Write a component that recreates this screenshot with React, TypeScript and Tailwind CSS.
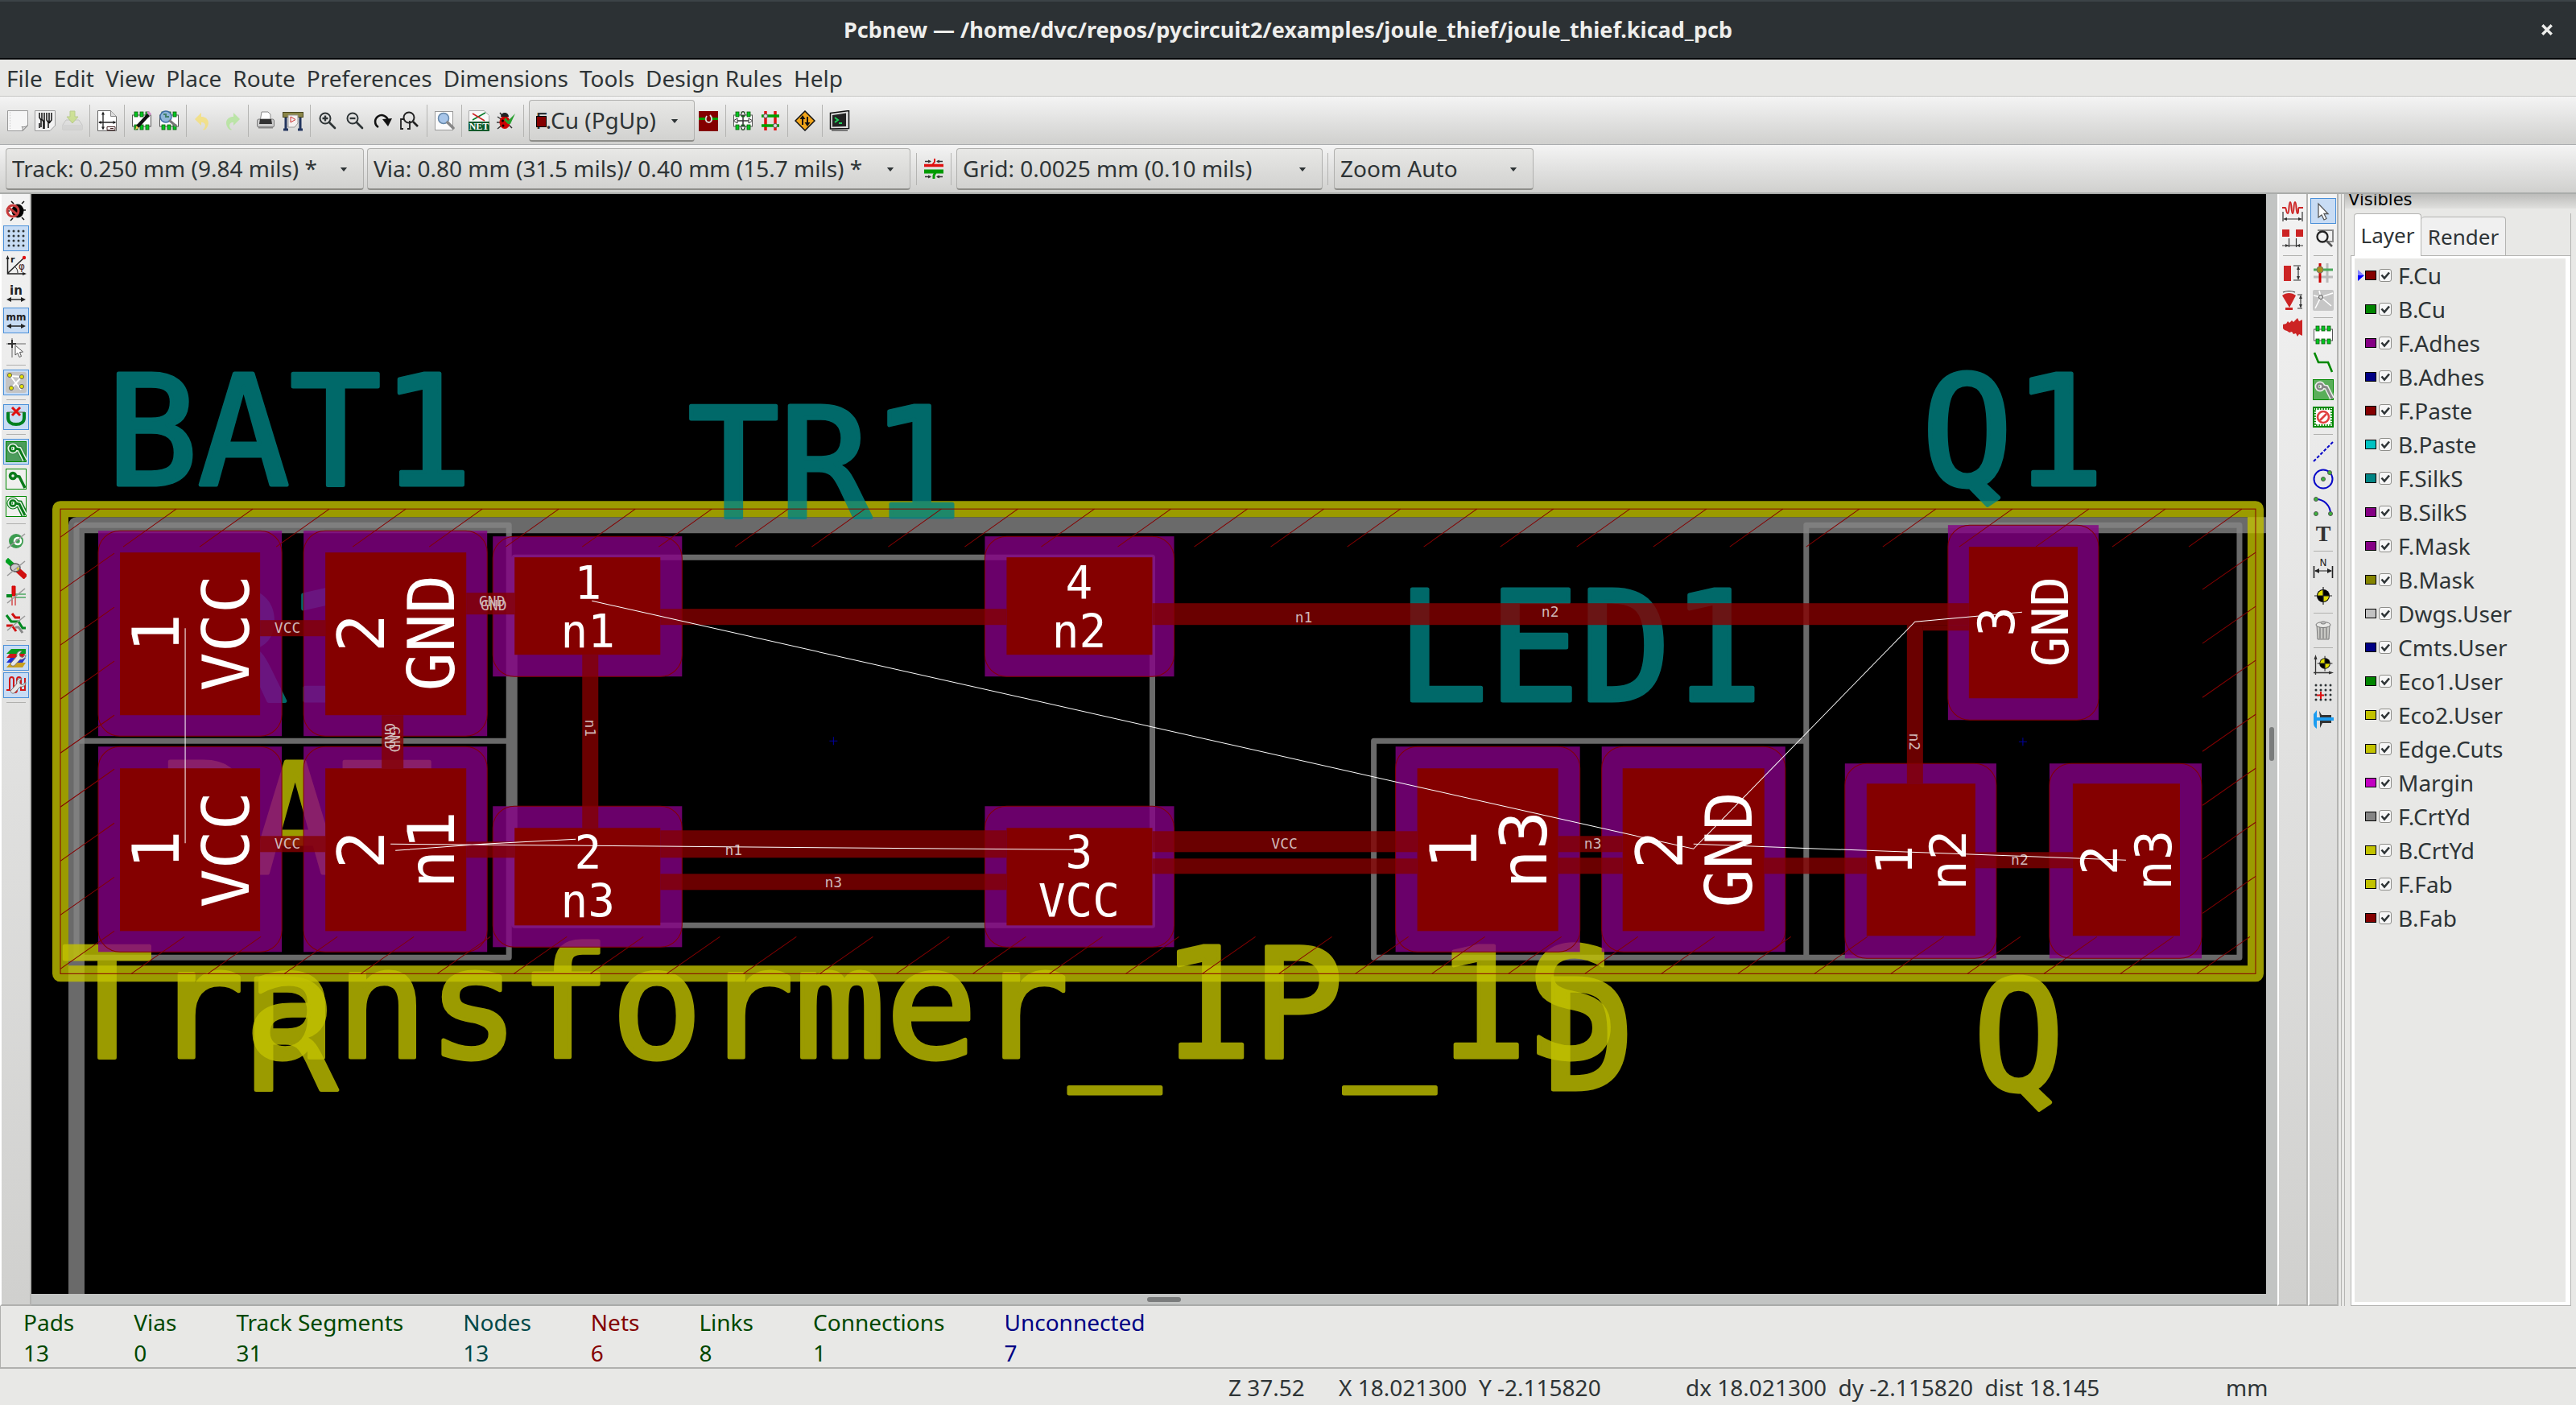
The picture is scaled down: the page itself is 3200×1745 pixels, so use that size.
import React, {useState} from "react";

const DARK = "#2e3436";
const GREEN = "#008800";
const CU = "#840000";

/* ---------- icons, all on a 26x26 grid ---------- */

const chip = (
    <g>
        <rect x="1.5" y="6" width="23" height="14" fill="#fff" stroke="#555"/>
        {[4, 11, 18].map((x) => (
            <g key={x} fill="#00c820" stroke="#0a5a0a" strokeWidth=".8">
                <rect x={x} y="2" width="4" height="6"/>
                <rect x={x} y="18" width="4" height="6"/>
            </g>
        ))}
    </g>
);

const lens = (
    <g fill="none" stroke={DARK}>
        <circle cx="10" cy="10" r="6.5" strokeWidth="2"/>
        <path d="M15 15l7 7" strokeWidth="2.6" strokeLinecap="round"/>
    </g>
);

const slash = <path d="M2 22L24 4" stroke="#999" strokeWidth="1.5"/>;

const target = (
    <g>
        <circle cx="13" cy="13" r="8" fill="#000"/>
        <path d="M13 13V6a7 7 0 0 0-7 7zM13 13v7a7 7 0 0 0 7-7z" fill="#e0dc00"/>
        <path d="M13 2v22M2 13h22" stroke="#222" strokeWidth="1.2"/>
    </g>
);

const trackPad = (bg: string, ring: string, core: string, halo: string) => (
    <g>
        <rect x=".5" y=".5" width="25" height="25" fill={bg} stroke={GREEN}/>
        <g fill="none" strokeLinecap="butt">
            <path d="M9 9l8 1 7 14" stroke={ring} strokeWidth="9"/>
            <circle cx="9" cy="9" r="4" stroke={ring} strokeWidth="7"/>
            <path d="M9 9l8 1 7 14" stroke={halo} strokeWidth="6"/>
            <circle cx="9" cy="9" r="4" stroke={halo} strokeWidth="5"/>
            <path d="M12 9l5 1 7 14" stroke={core} strokeWidth="3"/>
            <circle cx="9" cy="9" r="3.5" stroke={core} strokeWidth="2.6"/>
        </g>
    </g>
);

const wrench = (
    <path
        d="M25 9.5l-4 3-3-1-1-3 3-4c-4-.5-7 2.500-6 6.500L7 19c-2 2 1 5.500 4 3.500l7-7.500c4 .5 7-2 7-5.500z"
        fill="#e6e6e6" stroke="#777" strokeWidth="1"
    />
);

const icons: Record<string, React.ReactNode> = {
    newBoard: (
        <g>
            <path d="M.5.5h25v18.500l-6.500 6.500H.5z" fill="#f6f6f6" stroke="#999"/>
            <path d="M19 25.500c.5-2 0-4-1-5 3 .5 5.500 0 7.500-2z" fill="#ddd" stroke="#888"/>
            <path d="M3.500 2v22" stroke="#ccc" strokeDasharray="1 1"/>
        </g>
    ),
    openBoard: (
        <g>
            <path d="M.5.5h25v18.500l-6.500 6.500H.5z" fill="#f2f2f2" stroke="#999"/>
            <path d="M6 3v6l2 3v9M9 3v8l2 3v9M12 3v20M15 3v9l2 3v7M18 3v12M21 3v9l-3 4M6 16v6" fill="none" stroke="#111" strokeWidth="1.500"/>
        </g>
    ),
    save: (
        <g opacity=".5">
            <path d="M5 12h16l4 6v6H1v-6z" fill="#ddd" stroke="#aaa"/>
            <path d="M1 18h24v6H1z" fill="#ccc"/>
            <path d="M10 1h6v7h4l-7 8-7-8h4z" fill="#b5dc4a" stroke="#8fb43a"/>
        </g>
    ),
    page: (
        <g>
            <path d="M1.500.5h16l7 7v18h-23z" fill="#fff" stroke="#666"/>
            <path d="M17.500.5v7h7" fill="#ddd" stroke="#888"/>
            <path d="M8 3v20M3 15h20" stroke="#222" strokeWidth="1.300"/>
            <path d="M8 1.500l-2 4h4zM8 24.500l-2-4h4zM2 15l4-2v4zM24.500 15l-4-2v4z" fill="#222"/>
            <path d="M13 20.500h10v4H13zM17 22.500h4" fill="#fff" stroke="#422"/>
        </g>
    ),
    moduleEditor: (
        <g>
            {chip}
            <path d="M6 19L20 4l3 3L9 22l-4 2z" fill="#111"/>
            <path d="M19 3l2-2 4 3-2 3z" fill="#d58ac8"/>
            <path d="M5 24l1.500-5 3 3z" fill="#f3d14e"/>
        </g>
    ),
    moduleViewer: (
        <g>
            {chip}
            <circle cx="9" cy="8" r="7" fill="#8fb6d8" stroke="#3d6ea5" strokeWidth="1.500"/>
            <path d="M6 5h3v3h4" fill="none" stroke="#40806a" strokeWidth="2"/>
            <path d="M14 13l7 6" stroke="#777" strokeWidth="3" strokeLinecap="round"/>
        </g>
    ),
    undo: <path d="M10 3v5c8 0 12 7 6 15-1 1-3 2-4 1 5-4 3-10-2-9v4L2 11z" fill="#f3df7c" opacity=".85"/>,
    redo: <path d="M16 3v5C8 8 4 15 10 23c1 1 3 2 4 1-5-4-3-10 2-9v4l8-8z" fill="#b4e49c" opacity=".85"/>,
    print: (
        <g>
            <path d="M8 2h8l3 3v9H6z" fill="#fff" stroke="#888"/>
            <rect x="2.500" y="11" width="21" height="10" rx="2" fill="#ccc" stroke="#777"/>
            <path d="M6 11h14l1 6H5z" fill="#333"/>
            <rect x="4" y="20" width="18" height="2.500" fill="#888"/>
        </g>
    ),
    plot: (
        <g>
            <rect x=".5" y="2.500" width="25" height="6" fill="#8a8548" stroke="#4a4820"/>
            <path d="M4 9v14M22 9v14M1 24h6M19 24h6" stroke="#22355e" strokeWidth="3"/>
            <path d="M7 6h12v10l-4 5H7z" fill="#f4f0f0" stroke="#999"/>
            <path d="M10 8v7l6-3.500z" fill="none" stroke="#c33"/>
        </g>
    ),
    zoomIn: <g>{lens}<path d="M10 6.500v7M6.500 10h7" stroke={DARK} strokeWidth="2.400"/></g>,
    zoomOut: <g>{lens}<path d="M6.500 10h7" stroke={DARK} strokeWidth="2.400"/></g>,
    redraw: (
        <g>
            <path d="M8 21a8 8 0 1 1 12-8" fill="none" stroke="#111" strokeWidth="2.600"/>
            <path d="M13 11l12-1-5 10z" fill="#111"/>
        </g>
    ),
    zoomFit: (
        <g fill="none" stroke="#222">
            <path d="M5 11H2v12h3M10 23h3V13" strokeWidth="1.800"/>
            <circle cx="12" cy="9" r="6.500" strokeWidth="2"/>
            <path d="M17 14l6 6" strokeWidth="2.600"/>
        </g>
    ),
    find: (
        <g>
            <rect x="1.500" y="1.500" width="22" height="23" fill="#fbfbfb" stroke="#999"/>
            <circle cx="12" cy="10" r="6.500" fill="#a8c6ea" stroke="#6688aa" strokeWidth="1.500"/>
            <path d="M17 15l7 7" stroke="#888" strokeWidth="3.500" strokeLinecap="round"/>
        </g>
    ),
    netlist: (
        <g>
            <path d="M.5.5h19l6 6v19H.5z" fill="#f8f8f8" stroke="#aaa"/>
            <path d="M5 12L21 3" stroke="#0a7a2a" strokeWidth="1.500"/>
            <path d="M5 4l15 9" stroke="#c22" strokeWidth="1.500"/>
            <rect y="14" width="26" height="12" fill="#0b5a2b"/>
            <text x="13" y="24" fontFamily="Liberation Serif, serif" fontSize="12" fontWeight="700" fill="#fff" textAnchor="middle">NET</text>
        </g>
    ),
    drc: (
        <g>
            <path d="M2 8l6 4M1 15h6M2 23l6-5M20 22l-4-4M5 3l4 5" stroke="#333" strokeWidth="1.500"/>
            <ellipse cx="11" cy="15" rx="6.500" ry="8" fill="#c00"/>
            <path d="M6 8a5 5 0 0 1 10 0z" fill="#222"/>
            <circle cx="8.500" cy="13" r="1.500"/>
            <circle cx="9" cy="19" r="1.500"/>
            <path d="M12 9l3 4 9-9-6 13h-3l-5-5z" fill="#2aa030"/>
        </g>
    ),
    layerPair: (
        <g>
            <rect x="1" y="1" width="24" height="25" fill="#840000"/>
            <path d="M1 10.500h8M17 10.500h8" stroke="#00a000" strokeWidth="3"/>
            <path d="M11 7c-2 3-2 8 3 8 4-1 4-6 1-9" fill="none" stroke="#ddd" strokeWidth="1.800"/>
        </g>
    ),
    modeFootprint: (
        <g>
            {chip}
            <path d="M13 3v20M3 13h20" stroke="#333" strokeWidth="1.500"/>
            <path d="M13 1l-3 5h6zM13 25l-3-5h6zM1 13l5-3v6zM25 13l-5-3v6z" fill="#fff" stroke="#333"/>
        </g>
    ),
    modeTrack: (
        <g>
            <path d="M7 1v24M19 1v24" stroke="#e01010" strokeWidth="3.500"/>
            <path d="M2 7h22M2 19h22" stroke="#00a000" strokeWidth="3.500"/>
            <circle cx="7" cy="7" r="2.500" fill="#ddd" stroke="#555"/>
            <circle cx="19" cy="19" r="2.500" fill="#ddd" stroke="#555"/>
        </g>
    ),
    autoroute: (
        <g>
            <path d="M13 1l12 12-12 12L1 13z" fill="#f2a51a" stroke="#111" strokeWidth="1.500"/>
            <path d="M10 18V10M16 8v8" stroke="#111" strokeWidth="2"/>
            <path d="M10 6l-3.500 5h7zM16 20l-3.500-5h7z" fill="#111"/>
        </g>
    ),
    console: (
        <g>
            <path d="M1.500 3.500L24.500.5v22l-23 .5z" fill="#ddd" stroke="#111" strokeWidth="1.500"/>
            <path d="M4 6l17-2.500V20L4 20.500z" fill="#222"/>
            <path d="M7 9l4 3-4 3M12 16h4" fill="none" stroke="#1fd35a" strokeWidth="2"/>
            <path d="M3 25h20" stroke="#777" strokeWidth="2"/>
        </g>
    ),
    autoWidth: (
        <g>
            <path d="M1 8.500h24" stroke="#e01010" strokeWidth="3.500"/>
            <path d="M1 16h24" stroke="#009a00" strokeWidth="5"/>
            <path d="M14 0v4l-3 4" fill="none" stroke="#e01010" strokeWidth="2"/>
            <path d="M15 17l-2 4v4" fill="none" stroke="#009a00" strokeWidth="3"/>
            <path d="M2 3.500h7M17 3.500h7M2 22.500h7M17 22.500h7" stroke="#333" strokeWidth="1.300"/>
            <path d="M10 3.500l-4-2v4zM16 3.500l4-2v4zM10 22.500l-4-2v4zM16 22.500l4-2v4z" fill="#333"/>
        </g>
    ),
    drcOff: (
        <g>
            <path d="M10 4l-3-3M20 4l3-3M5 13H1M25 12h-4M9 22l-3 3M20 21l3 3" stroke="#111" strokeWidth="1.500"/>
            <ellipse cx="15" cy="13" rx="7.500" ry="8.500"/>
            <circle cx="9" cy="13" r="7" fill="none" stroke="#c83c3c" strokeWidth="3"/>
            <path d="M4 9l10 8" stroke="#c83c3c" strokeWidth="3"/>
        </g>
    ),
    grid: (
        <g fill={DARK}>
            {[4, 10, 16, 22].map((y) => [4, 10, 16, 22].map((x) => <circle key={x + "-" + y} cx={x} cy={y} r="1.500"/>))}
        </g>
    ),
    polar: (
        <g fill="none" stroke="#222" strokeWidth="1.500">
            <path d="M2.500 3v20H24M3 22L22 4"/>
            <path d="M2.500 0L.5 5h4zM26 23l-5-2v4z" fill="#222" stroke="none"/>
            <circle cx="23" cy="3" r="2.200" fill="#e01010" stroke="none"/>
            <path d="M11 14c3 2 4 5 4 8" strokeWidth="1"/>
            <text x="6" y="9" fontFamily="DejaVu Sans, sans-serif" fontSize="11" fontWeight="700" fill="#222" stroke="none">r</text>
            <text x="16" y="18" fontFamily="DejaVu Sans, sans-serif" fontSize="12" fill="#422" stroke="none">φ</text>
        </g>
    ),
    inch: (
        <g fill="#222">
            <text x="13" y="15" fontFamily="DejaVu Sans, sans-serif" fontSize="15" fontWeight="700" textAnchor="middle">in</text>
            <path d="M3 21h20" stroke="#222" strokeWidth="1.500"/>
            <path d="M1 21l6-3v6zM25 21l-6-3v6z"/>
        </g>
    ),
    mm: (
        <g fill="#222">
            <text x="13" y="13" fontFamily="DejaVu Sans, sans-serif" fontSize="12" fontWeight="700" textAnchor="middle">mm</text>
            <path d="M3 20h20" stroke="#222" strokeWidth="1.500"/>
            <path d="M1 20l6-3v6zM25 20l-6-3v6z"/>
        </g>
    ),
    cursor: (
        <g>
            <path d="M8 1v24M1 8h24" stroke="#aaa" strokeWidth="2"/>
            <path d="M8 3v10M3 8h10" stroke="#333" strokeWidth="2"/>
            <path d="M12 10v12l3-2.500 2 5 2.500-1-2-5 4-.5z" fill="#fff" stroke="#555"/>
        </g>
    ),
    ratsnest: (
        <g>
            <rect width="26" height="26" rx="3" fill="#c4c4c4"/>
            <path d="M6 5l13 17M20 6L7 20M6 5l14 1" stroke="#fff" strokeWidth="2"/>
            {[[5, 4], [20, 6], [7, 20], [20, 18]].map(([x, y]) => <circle key={x + "-" + y} cx={x} cy={y} r="2.600" fill="#e2e000" stroke="#666"/>)}
        </g>
    ),
    autoDelete: (
        <g>
            <path d="M2 7h22" stroke="#999" strokeWidth="2"/>
            <path d="M3 7v7c0 5 4 8 10 8s10-3 10-8V7" fill="none" stroke="#008020" strokeWidth="4"/>
            <path d="M8 1l10 10M18 1L8 11" stroke="#e01010" strokeWidth="3"/>
        </g>
    ),
    zoneFill: trackPad("#4c9c5c", "#3e8e4e", "#0a7a1a", "#e8f4e8"),
    zoneOff: (
        <g>
            <rect x=".5" y=".5" width="25" height="25" fill="#f0f0ee" stroke={GREEN}/>
            <circle cx="9" cy="9" r="3.500" fill="none" stroke="#0a7a1a" strokeWidth="3.500"/>
            <path d="M12 9l5 1 7 14" fill="none" stroke="#0a7a1a" strokeWidth="3.500"/>
        </g>
    ),
    zoneOutline: trackPad("#f0f0ee", "#0a7a1a", "#0a7a1a", "#e8f4e8"),
    viaSketch: (
        <g>
            <circle cx="13" cy="13" r="9" fill="#3c9c50"/>
            <circle cx="15" cy="13" r="4" fill="#3c9c50" stroke="#fff" strokeWidth="2.500"/>
            {slash}
        </g>
    ),
    padSketch: (
        <g>
            <path d="M1 2l10 9" stroke="#00a020" strokeWidth="6"/>
            <path d="M15 15l10 9" stroke="#d01010" strokeWidth="7"/>
            <ellipse cx="12" cy="12" rx="6" ry="5" fill="#ccc" stroke="#555" strokeWidth="1.500"/>
            <path d="M13 12h4l-2 4z" fill="#e0c020"/>
            {slash}
        </g>
    ),
    edgeSketch: (
        <g>
            <path d="M8 1h4v12H8z" fill="#e01010" stroke="#c00"/>
            <path d="M1 11h7v4H1z" fill="#008820"/>
            <path d="M12 11h13M12 15h13" stroke="#008820"/>
            <path d="M8 15v10M12 15v10" stroke="#c00"/>
            {slash}
        </g>
    ),
    trackSketch: (
        <g fill="none" strokeWidth="3">
            <path d="M8 1l4 5h6" stroke="#d01010"/>
            <path d="M1 3l6 8h9l5 8h4" stroke="#008820"/>
            <path d="M1 16h7l5 7" stroke="#d01010"/>
            <path d="M12 18h4l5 7" stroke="#888"/>
            {slash}
        </g>
    ),
    layersManager: (
        <g>
            <path d="M1 25h20l4-6H6z" fill="#c8a020"/>
            <path d="M1 19h20l4-6H6z" fill="#2030d0"/>
            <path d="M1 13h20l4-6H6z" fill="#d01818"/>
            <path d="M1 8l6-6h18v6z" fill="#0a9a20"/>
            {wrench}
        </g>
    ),
    microwave: (
        <g>
            <path d="M1 19h4V6c0-4 5-4 5 0v13c0 4 4 4 4 0V6c0-4 5-4 5 0v13h5V4" fill="none" stroke="#d01818" strokeWidth="2"/>
            {wrench}
        </g>
    ),
    muLine: (
        <g>
            <path d="M0 9h4c1 0 1 7 3 7s1-14 3-14 1 14 3 14 1-14 3-14 1 14 3 14 0-7 2-7h5" fill="none" stroke="#cc2424" strokeWidth="2"/>
            <path d="M1 14v12M25 14v12M3 23h20" stroke="#333" strokeWidth="1.200"/>
            <path d="M1 23l5-2v4zM25 23l-5-2v4z" fill="#333"/>
        </g>
    ),
    muGap: (
        <g>
            <path d="M0 2h9v9H0zM17 2h9v9h-9z" fill="#cc2424"/>
            <path d="M8.500 13v11M17.500 13v11M0 22h26" stroke="#333" strokeWidth="1.200"/>
            <path d="M8 22l-4-2v4zM18 22l4-2v4z" fill="#333"/>
        </g>
    ),
    muStub: (
        <g>
            <path d="M2 4h9v19H2z" fill="#cc2424"/>
            <path d="M14 4h9M14 22h9M20 6v14" stroke="#333" strokeWidth="1.200"/>
            <path d="M20 4l-2 5h4zM20 22l-2-5h4z" fill="#333"/>
        </g>
    ),
    muArc: (
        <g>
            <path d="M0 7c5-4 12-4 17 0l-8 15zM4 22h9v3H4z" fill="#cc2424"/>
            <path d="M1 3c4-2 11-2 15 0M19 6h6M19 23h6M23 8v13" fill="none" stroke="#333" strokeWidth="1.200"/>
            <path d="M23 6l-2 5h4zM23 23l-2-5h4z" fill="#333"/>
        </g>
    ),
    muShape: <path d="M1 9l4-1 2-3 2 2 3-3 2 2 3-3 2-2 2 4 4-2v20l-4-2-2 3-2-4-3 1-2-3-3 1-3-2-3-1-2-2z" fill="#cc2424"/>,
    arrow: <path d="M7 4v17l4-3 3 6 3-1.500-3-6h5z" fill="#fff" stroke="#555" strokeWidth="1.300"/>,
    localView: (
        <g fill="none">
            <path d="M6 3h19v14h-7" stroke="#888" strokeWidth="2"/>
            <circle cx="12" cy="11" r="6.500" stroke="#222" strokeWidth="2.300"/>
            <path d="M17 16l7 7" stroke="#555" strokeWidth="2.600"/>
        </g>
    ),
    highlight: (
        <g>
            <path d="M18 1v24M1 18h24" stroke="#bbb" strokeWidth="3"/>
            <path d="M9 1v24" stroke="#c00" strokeWidth="3"/>
            <path d="M1 9h24" stroke="#4aa85a" strokeWidth="3"/>
            <circle cx="9" cy="9" r="4" fill="#a89020" stroke="#776"/>
        </g>
    ),
    localRats: (
        <g>
            <rect width="26" height="26" rx="2" fill="#c6c6c6"/>
            <path d="M1 7l9 2 15-5M10 9l13 11M10 9L3 23M10 9L8 1" fill="none" stroke="#fff" strokeWidth="1.600"/>
            <circle cx="10" cy="9" r="2.500" fill="#ddd" stroke="#555"/>
        </g>
    ),
    addModule: chip,
    addTrack: <path d="M2 1l5 12h12l5 12" fill="none" stroke={GREEN} strokeWidth="2.600"/>,
    addZone: trackPad("#5aae5a", "#5aae5a", "#888", "#eee"),
    keepout: (
        <g>
            <rect x="1" y="1" width="24" height="24" fill="#fff" stroke={GREEN} strokeWidth="2"/>
            <rect x="3" y="3" width="20" height="20" fill="none" stroke={GREEN} strokeWidth="2" strokeDasharray="1 1"/>
            <circle cx="13" cy="13" r="7" fill="none" stroke="#e04040" strokeWidth="2.600"/>
            <path d="M9 17l8-8" stroke="#e04040" strokeWidth="2.600"/>
        </g>
    ),
    addLine: <path d="M1 25L25 1" stroke="#0808c8" strokeWidth="2" strokeDasharray="4 2"/>,
    addCircle: (
        <g>
            <circle cx="13" cy="13" r="11.500" fill="none" stroke="#0808c8" strokeWidth="2"/>
            <circle cx="13" cy="13" r="2.500" fill="#3cb43c" stroke="#555"/>
            <circle cx="21" cy="5" r="2.500" fill="#3cb43c" stroke="#555"/>
        </g>
    ),
    addArc: (
        <g>
            <path d="M4 4c10 0 18 8 18 18" fill="none" stroke="#0808c8" strokeWidth="2"/>
            {[[4, 4], [4, 22], [22, 22]].map(([x, y]) => <circle key={x + "-" + y} cx={x} cy={y} r="2.500" fill="#3cb43c" stroke="#555"/>)}
        </g>
    ),
    addText: (
        <text x="13" y="22" fontFamily="Liberation Serif, serif" fontSize="28" fontWeight="700" fill="#333" textAnchor="middle">T</text>
    ),
    addDimension: (
        <g fill="#222">
            <text x="13" y="10" fontFamily="DejaVu Sans, sans-serif" fontSize="12" textAnchor="middle">N</text>
            <path d="M1.500 10v15M24.500 10v15" stroke="#222" strokeWidth="1.600"/>
            <path d="M3 16h20" stroke="#222"/>
            <path d="M2 16l6-3v6zM24 16l-6-3v6z"/>
        </g>
    ),
    addTarget: target,
    trash: (
        <g>
            <path d="M5 6h16l-1 18H6z" fill="#c8c8c4" stroke="#777"/>
            <path d="M9 9v14M13 9v14M17 9v14" stroke="#888" strokeWidth="1.500"/>
            <ellipse cx="13" cy="6" rx="9" ry="3.500" fill="#e8e8e6" stroke="#777"/>
            <ellipse cx="13" cy="3.500" rx="3" ry="1.500" fill="#ccc" stroke="#777"/>
        </g>
    ),
    origin: (
        <g>
            <path d="M3.500 3v22M1 22.500h22" stroke="#333" strokeWidth="1.300"/>
            <path d="M3.500 0l-2 6h4zM26 22.500l-6-2v4z" fill="#333"/>
            <g transform="translate(4 0) scale(.85)">{target}</g>
        </g>
    ),
    gridOrigin: (
        <g fill={DARK}>
            {[4, 10, 16, 22].map((y) => [4, 10, 16, 22].map((x) => <circle key={x + "-" + y} cx={x} cy={y} r="1.500"/>))}
            <path d="M10 12v9M5 16.500h9" stroke="#e01010" strokeWidth="2"/>
        </g>
    ),
    caliper: (
        <g>
            <path d="M8 2l3 5h12v3H9zM9 14h14v3H12l-3 6z" fill="#333"/>
            <path d="M1 6l4-5v9h21v4H5v10C2 22 1 20 1 17z" fill="#1c9cf0"/>
        </g>
    ),
};

const Icon = ({name}: { name: string }) => (
    <svg viewBox="0 0 26 26" className="size-[26px] shrink-0" aria-hidden="true">{icons[name]}</svg>
);

const ToolButton = ({name, active}: { name: string; active?: boolean }) => (
    <button
        type="button"
        aria-label={name}
        className={`flex shrink-0 items-center justify-center ${active ? "my-px size-8 border border-[#4a90d9] bg-[#c8dcf4]" : "h-[34px] w-[34px]"}`}
    >
        <Icon name={name}/>
    </button>
);

const VSep = () => (
    <div className="flex w-[9px] shrink-0 justify-center">
        <div className="h-10 w-px bg-[#b4b4b2]"/>
    </div>
);

// "|" is a separator, a leading "*" marks a pressed button
const ToolRow = ({items}: { items: string[] }) => (
    <>
        {items.map((item, i) => item === "|" ? <VSep key={i}/> : <ToolButton key={i} name={item}/>)}
    </>
);

const ToolColumn = ({items, className}: { items: string[]; className: string }) => (
    <div className={`flex shrink-0 flex-col items-center border-r-2 border-b-2 border-l-2 border-r-[#b4b4b2] border-b-[#b0b0ae] border-l-white bg-linear-to-b from-[#f2f2f2] to-[#d0d0ce] pt-1 ${className}`}>
        {items.map((item, i) => item === "|"
            ? <div key={i} className="flex h-[9px] items-center"><div className="h-px w-6 bg-[#b0b0ae]"/></div>
            : <ToolButton key={i} name={item.replace("*", "")} active={item.startsWith("*")}/>)}
    </div>
);

const Dropdown = ({label, value, className, children}: { label: string; value: string; className: string; children?: React.ReactNode }) => (
    <div className={`relative h-[52px] shrink-0 ${className}`}>
        <select
            aria-label={label}
            defaultValue={value}
            className="h-full w-full appearance-none rounded-[4px] border border-b-2 border-[#b0b0ae] border-b-[#8e8e8a] bg-linear-to-b from-[#e8e8e6] to-[#d2d2d0] pl-[7px] text-[28px]"
        >
            <option>{value}</option>
        </select>
        {children}
        <svg viewBox="0 0 10 6" className="pointer-events-none absolute top-6 right-5 h-[5px] w-[10px]" aria-hidden="true">
            <path d="M0 0h10L5 6z" fill={DARK}/>
        </svg>
    </div>
);

/* ---------- board drawing ---------- */

type Pad = {
    mask: number[];
    cu: number[];
    num: string;
    net: string;
    size: number;
    vertical?: boolean;
    at: number[]; // baseline of number, baseline of net, centre on the other axis
};

const pads: Pad[] = [
    {mask: [122, 659, 350, 914], cu: [149, 686, 323, 888], num: "1", net: "VCC", size: 80, vertical: true, at: [222, 309, 786]},
    {mask: [377, 659, 605, 914], cu: [404, 686, 579, 888], num: "2", net: "GND", size: 80, vertical: true, at: [477, 564, 786]},
    {mask: [122, 927, 350, 1182], cu: [149, 954, 323, 1156], num: "1", net: "VCC", size: 80, vertical: true, at: [222, 309, 1055]},
    {mask: [377, 927, 605, 1182], cu: [404, 954, 579, 1156], num: "2", net: "n1", size: 80, vertical: true, at: [477, 564, 1055]},
    {mask: [612, 666, 847, 840], cu: [639, 692, 820, 813], num: "1", net: "n1", size: 56, at: [744, 804, 730]},
    {mask: [612, 1001, 847, 1176], cu: [639, 1028, 820, 1149], num: "2", net: "n3", size: 56, at: [1079, 1139, 730]},
    {mask: [1223, 666, 1458, 840], cu: [1250, 692, 1431, 813], num: "4", net: "n2", size: 56, at: [744, 804, 1340]},
    {mask: [1223, 1001, 1458, 1176], cu: [1250, 1028, 1431, 1149], num: "3", net: "VCC", size: 56, at: [1079, 1139, 1340]},
    {mask: [1733, 927, 1962, 1182], cu: [1760, 954, 1935, 1156], num: "1", net: "n3", size: 80, vertical: true, at: [1833, 1920, 1055]},
    {mask: [1989, 927, 2217, 1182], cu: [2015, 954, 2191, 1156], num: "2", net: "GND", size: 80, vertical: true, at: [2089, 2175, 1055]},
    {mask: [2419, 652, 2606, 894], cu: [2445, 679, 2580, 867], num: "3", net: "GND", size: 62, vertical: true, at: [2501, 2568, 772]},
    {mask: [2291, 948, 2479, 1190], cu: [2318, 973, 2453, 1162], num: "1", net: "n2", size: 62, vertical: true, at: [2374, 2441, 1068]},
    {mask: [2545, 948, 2734, 1190], cu: [2574, 973, 2707, 1162], num: "2", net: "n3", size: 62, vertical: true, at: [2629, 2696, 1068]},
];

// x1, y1, x2, y2
const tracks = [
    [323, 770, 404, 790],
    [579, 736, 639, 763],
    [820, 756, 1250, 776],
    [723, 813, 743, 1028],
    [474, 888, 501, 954],
    [323, 1038, 404, 1058],
    [579, 1045, 639, 1065],
    [820, 1031, 1250, 1065],
    [820, 1085, 1250, 1105],
    [1431, 749, 2445, 776],
    [2388, 776, 2445, 783],
    [2368, 776, 2388, 973],
    [1431, 1032, 1760, 1058],
    [1431, 1066, 1760, 1085],
    [1935, 1038, 2015, 1058],
    [1935, 1065, 2015, 1085],
    [2191, 1065, 2318, 1085],
    [2453, 1058, 2574, 1078],
];

const trackLabels: [string, number, number, number][] = [
    ["VCC", 357, 780, 0],
    ["GND", 611, 747, 0],
    ["GND", 613, 752, 0],
    ["n1", 733, 904, 90],
    ["GND", 484, 914, 90],
    ["GND", 490, 918, 90],
    ["VCC", 357, 1048, 0],
    ["n1", 911, 1056, 0],
    ["n3", 1035, 1096, 0],
    ["VCC", 1595, 1048, 0],
    ["n1", 1619, 767, 0],
    ["n2", 1925, 760, 0],
    ["n3", 1978, 1048, 0],
    ["n2", 2508, 1068, 0],
    ["n2", 2377, 921, 90],
];

const silk: [string, number, number][] = [
    ["BAT1", 132, 602],
    ["TR1", 854, 642],
    ["R1", 240, 870],
    ["LED1", 1734, 870],
    ["Q1", 2386, 602],
];

const fab: [string, number, number][] = [
    ["BAT", 196, 1084],
    ["Transformer_1P_1S", 76, 1313],
    ["R", 305, 1353],
    ["D", 1916, 1353],
    ["Q", 2450, 1353],
];

const range = (start: number, end: number, step: number) => {
    const out: number[] = [];
    for (let v = start; v <= end; v += step) out.push(v);
    return out;
};

const hatch = [
    "M124 632L75 667",
    ...range(219, 2790, 95).map((x) => `M${x} 632l-66 47`),
    ...range(734, 1209, 67).map((y) => `M75 ${y}l67 -47`),
    ...range(163, 2780, 95).map((x) => `M${x} 1209l66 -46`),
    ...range(686, 1110, 67).map((y) => `M2801 ${y}l-66 46`),
].join("");

const BoardText = ({items, color}: { items: [string, number, number][]; color: string }) => (
    <>
        {items.map(([text, x, y]) => (
            <text
                key={text + x} x={x} y={y} fontSize="189" fontFamily="DejaVu Sans Mono, monospace"
                fill={color} stroke={color} strokeWidth="5" strokeLinejoin="round" opacity=".8"
            >
                {text}
            </text>
        ))}
    </>
);

const Board = () => (
    <svg viewBox="39 241 2775 1366" preserveAspectRatio="xMinYMin slice" className="block h-full w-full bg-black" role="img" aria-label="Board">
        <g fill="none" stroke="#848484" strokeLinejoin="round" opacity=".8">
            <path d="M2830 652H95V1620" strokeWidth="20"/>
        </g>
        <g fill="none" stroke="#848484" strokeWidth="7" strokeLinejoin="round" opacity=".8">
            <path d="M95 652H632V1189H95zM95 920H632M639 692H1431V1149H639zM1706 920H2243V1189H1706zM2243 652H2781V1189H2243z"/>
        </g>
        <BoardText items={fab} color="#c2c200"/>
        <rect x="75" y="632" width="2726" height="577" fill="none" stroke="#c2c200" strokeWidth="20" strokeLinejoin="round" opacity=".8"/>
        <BoardText items={silk} color="#008484"/>

        {pads.map(({mask: [x1, y1, x2, y2]}) => (
            <rect key={x1 + "-" + y1} x={x1} y={y1} width={x2 - x1} height={y2 - y1} fill="#840084" opacity=".8"/>
        ))}
        {tracks.map(([x1, y1, x2, y2]) => (
            <rect key={x1 + "-" + y1} x={x1} y={y1} width={x2 - x1} height={y2 - y1} fill={CU} opacity=".8"/>
        ))}
        {pads.map(({mask: [x1, y1, x2, y2], cu}) => (
            <g key={x1 + "-" + y1}>
                <rect x={cu[0]} y={cu[1]} width={cu[2] - cu[0]} height={cu[3] - cu[1]} fill={CU}/>
                <rect x={x1} y={y1} width={x2 - x1} height={y2 - y1} rx="27" fill="none" stroke={CU}/>
            </g>
        ))}
        <path d={hatch} stroke={CU} strokeWidth="1"/>
        <rect x="75" y="632" width="2726" height="577" fill="none" stroke={CU}/>

        <g fontFamily="DejaVu Sans Mono, monospace" textAnchor="middle" fill="#fff">
            {pads.map(({cu, num, net, size, vertical, at: [a, b, c]}) => (
                <g key={cu.join()} fontSize={size}>
                    {vertical ? (
                        <>
                            <text transform={`translate(${a} ${c}) rotate(-90)`}>{num}</text>
                            <text transform={`translate(${b} ${c}) rotate(-90)`}>{net}</text>
                        </>
                    ) : (
                        <>
                            <text x={c} y={a}>{num}</text>
                            <text x={c} y={b}>{net}</text>
                        </>
                    )}
                </g>
            ))}
            {trackLabels.map(([text, x, y, angle]) => (
                <text key={text + x} transform={`translate(${x} ${y}) rotate(${angle})`} y="6" fontSize="18" fill="#d0b8b8">{text}</text>
            ))}
        </g>

        <path
            d="M230 780V1047M735 746L2103 1054L2378 772L2511 760M491 1056L600 1048L715 1042M485 1048L1340 1055M2103 1048L2640 1068"
            fill="none" stroke="#fff"
        />
        <path d="M1030 920h10M1035 915v10M2507 921h10M2512 916v10" stroke="#0000a0"/>
    </svg>
);

/* ---------- panels ---------- */

const menus = ["File", "Edit", "View", "Place", "Route", "Preferences", "Dimensions", "Tools", "Design Rules", "Help"];

const layers = [
    ["F.Cu", "#840000"], ["B.Cu", "#008400"], ["F.Adhes", "#840084"], ["B.Adhes", "#000084"],
    ["F.Paste", "#840000"], ["B.Paste", "#00c2c2"], ["F.SilkS", "#008484"], ["B.SilkS", "#840084"],
    ["F.Mask", "#840084"], ["B.Mask", "#848400"], ["Dwgs.User", "#c2c2c2"], ["Cmts.User", "#000084"],
    ["Eco1.User", "#008400"], ["Eco2.User", "#c2c200"], ["Edge.Cuts", "#c2c200"], ["Margin", "#c200c2"],
    ["F.CrtYd", "#848484"], ["B.CrtYd", "#c2c200"], ["F.Fab", "#c2c200"], ["B.Fab", "#840000"],
];

const stats = [
    ["Pads", "13", "text-[#004800]"],
    ["Vias", "0", "text-[#004800]"],
    ["Track Segments", "31", "text-[#004800]"],
    ["Nodes", "13", "text-[#004848]"],
    ["Nets", "6", "text-[#840000]"],
    ["Links", "8", "text-[#004800]"],
    ["Connections", "1", "text-[#004800]"],
    ["Unconnected", "7", "text-[#000084]"],
];

const LayersPanel = () => {
    const [visible, setVisible] = useState<Record<string, boolean>>({});

    return (
        <aside className="flex w-[288px] shrink-0 flex-col overflow-hidden border-l border-[#b4b4b2] bg-[#e8e8e6]">
            <div className="flex h-[18px] shrink-0 items-end bg-linear-to-b from-[#bcbcba] to-[#e0e0de] pl-1">
                <h2 className="font-['DejaVu_Sans',sans-serif] text-[21px] leading-[22px] text-black">Visibles</h2>
            </div>
            <div className="mt-[6px] mr-[6px] flex min-h-0 flex-1 flex-col border-r border-[#b4b4b2] pl-[7px]">
                <div role="tablist" className="flex items-end pl-1 text-[26px]">
                    <button type="button" role="tab" aria-selected="true" className="z-10 -mb-px h-[53px] w-[84px] rounded-t-[4px] border border-b-0 border-[#b4b4b2] bg-white">Layer</button>
                    <button type="button" role="tab" aria-selected="false" className="h-12 w-[105px] rounded-t-[4px] border border-b-0 border-l-0 border-[#b4b4b2] bg-[#f0f0f0]">Render</button>
                </div>
                <div className="min-h-0 flex-1 border border-r-0 border-[#b4b4b2] bg-white pt-[3px] pr-[6px] pb-1 pl-1">
                    <ul className="h-full bg-[#e8e8e6]">
                        {layers.map(([name, color], i) => (
                            <li key={name}>
                                <label className="flex h-[42px] items-center pl-1">
                                    <svg viewBox="0 0 8 14" className="mr-px h-[14px] w-2" aria-hidden="true">
                                        {i === 0 && <><path d="M0 0v7h8z" fill="#8080ff"/><path d="M0 14V7h8z" fill="#0000ff"/></>}
                                    </svg>
                                    <span className="h-3 w-[14px] border border-black" style={{backgroundColor: color}}/>
                                    <span className="relative ml-[3px] flex size-4 items-center justify-center">
                                        <input
                                            type="checkbox"
                                            checked={visible[name] ?? true}
                                            onChange={(e) => setVisible({...visible, [name]: e.target.checked})}
                                            className="peer size-4 appearance-none rounded-[3px] border border-[#8e8e8a] bg-[#f6f6f6]"
                                        />
                                        <svg viewBox="0 0 12 12" className="pointer-events-none absolute size-3 opacity-0 peer-checked:opacity-100" aria-hidden="true">
                                            <path d="M1.500 5.500l3.500 4 6-7" fill="none" stroke={DARK} strokeWidth="2.600"/>
                                        </svg>
                                    </span>
                                    <span className="ml-2">{name}</span>
                                </label>
                            </li>
                        ))}
                    </ul>
                </div>
            </div>
        </aside>
    );
};

const App = () => {
    return (
        <div className="flex h-screen flex-col overflow-hidden bg-[#e8e8e6] font-['Noto_Sans',sans-serif] text-[28px] leading-9 text-[#2e3436]">
            <header className="relative flex h-[74px] shrink-0 items-center justify-center border-t-2 border-b-2 border-t-[#3c4347] border-b-[#06080a] bg-[#2c3134]">
                <h1 className="text-[27px] font-bold text-[#eeeeec]">Pcbnew — /home/dvc/repos/pycircuit2/examples/joule_thief/joule_thief.kicad_pcb</h1>
                <button type="button" aria-label="Close" className="absolute right-7 flex size-4 items-center justify-center">
                    <svg viewBox="0 0 14 14" className="size-4"><path d="M2 2l10 10M12 2L2 12" stroke="#eeeeec" strokeWidth="3"/></svg>
                </button>
            </header>

            <nav className="flex h-[46px] shrink-0 items-center gap-[14px] border-b border-[#c8c8c6] pl-2">
                {menus.map((menu) => <button key={menu} type="button">{menu}</button>)}
            </nav>

            <div className="flex h-[60px] shrink-0 items-center border-b border-[#aaacae] bg-linear-to-b from-[#f4f4f4] to-[#d0d0ce] pl-[5px]">
                <ToolRow items={["newBoard", "openBoard", "save", "|", "page", "|", "moduleEditor", "moduleViewer", "|", "undo", "redo", "|", "print", "plot", "|", "zoomIn", "zoomOut", "redraw", "zoomFit", "|", "find", "|", "netlist", "drc", "|"]}/>
                <Dropdown label="Active layer" value="F.Cu (PgUp)" className="ml-[2px] w-[206px]">
                    <span className="pointer-events-none absolute top-[20px] left-[9px] h-[14px] w-[13px] border border-black bg-[#840000]"/>
                </Dropdown>
                <ToolRow items={["layerPair", "|", "modeFootprint", "modeTrack", "|", "autoroute", "|", "console"]}/>
            </div>

            <div className="flex h-[61px] shrink-0 items-center border-b-2 border-[#aaacaa] bg-linear-to-b from-[#f4f4f4] to-[#d0d0ce] pl-[7px]">
                <Dropdown label="Track width" value="Track: 0.250 mm (9.84 mils) *" className="w-[445px]"/>
                <Dropdown label="Via size" value="Via: 0.80 mm (31.5 mils)/ 0.40 mm (15.7 mils) *" className="mr-[3px] ml-1 w-[675px]"/>
                <ToolRow items={["|", "autoWidth", "|"]}/>
                <Dropdown label="Grid" value="Grid: 0.0025 mm (0.10 mils)" className="mr-[2px] ml-[2px] w-[455px]"/>
                <VSep/>
                <Dropdown label="Zoom" value="Zoom Auto" className="ml-[3px] w-[248px]"/>
            </div>

            <div className="flex min-h-0 flex-1">
                <ToolColumn
                    className="w-[39px]"
                    items={["drcOff", "*grid", "polar", "inch", "*mm", "cursor", "|", "*ratsnest", "|", "*autoDelete", "|", "*zoneFill", "zoneOff", "zoneOutline", "|", "viaSketch", "padSketch", "edgeSketch", "trackSketch", "|", "*layersManager", "*microwave", "|"]}
                />
                <div className="flex min-w-0 flex-1 flex-col">
                    <div className="flex min-h-0 flex-1">
                        <main className="min-w-0 flex-1 overflow-hidden bg-black"><Board/></main>
                        <div className="flex w-[14px] shrink-0 items-center justify-center bg-[#c2c4c3]">
                            <div className="h-[42px] w-[6px] rounded-full bg-[#7a7c7c]"/>
                        </div>
                    </div>
                    <div className="flex h-[15px] shrink-0 items-center justify-center border-b-2 border-[#a8aaa8] bg-[#c2c4c3] pl-6">
                        <div className="h-[6px] w-[42px] rounded-full bg-[#7a7c7c]"/>
                    </div>
                </div>
                <ToolColumn className="w-[38px]" items={["muLine", "muGap", "|", "muStub", "muArc", "muShape"]}/>
                <ToolColumn
                    className="w-[38px]"
                    items={["*arrow", "localView", "|", "highlight", "localRats", "|", "addModule", "addTrack", "addZone", "keepout", "|", "addLine", "addCircle", "addArc", "addText", "|", "addDimension", "addTarget", "|", "trash", "|", "origin", "gridOrigin", "caliper"]}
                />
                <div className="mr-[3px] w-1 shrink-0 border-r border-[#b4b4b2]"/>
                <LayersPanel/>
            </div>

            <dl className="flex h-[78px] shrink-0 gap-[74px] border-b-2 border-l border-[#b0b0ae] pl-7">
                {stats.map(([label, value, color]) => (
                    <div key={label} className={color}>
                        <dt className="h-[38px] leading-[40px]">{label}</dt>
                        <dd className="h-[38px] leading-[40px]">{value}</dd>
                    </div>
                ))}
            </dl>

            <footer className="flex h-[45px] shrink-0 items-center justify-end whitespace-pre">
                <span className="w-[137px]">Z 37.52</span>
                <span className="w-[431px]">X 18.021300  Y -2.115820</span>
                <span className="w-[671px]">dx 18.021300  dy -2.115820  dist 18.145</span>
                <span className="w-[435px]">mm</span>
            </footer>
        </div>
    );
};

export default App;
